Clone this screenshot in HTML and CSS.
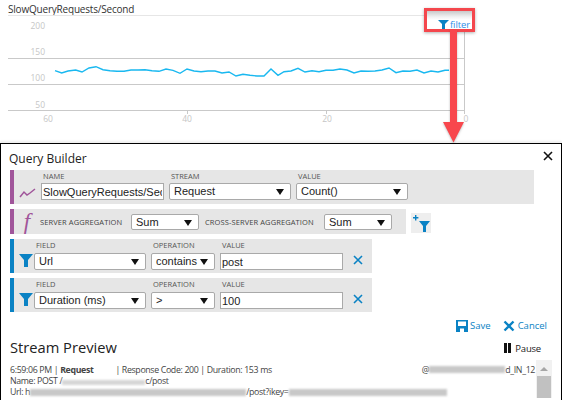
FILE: index.html
```html
<!DOCTYPE html>
<html lang="en">
<head>
<meta charset="UTF-8">
<meta name="viewport" content="width=device-width, initial-scale=1.0">
<title>Query Builder</title>
<link rel="stylesheet" href="styles.css">
</head>
<body>

<div class="chart">
    <div class="chart-title">SlowQueryRequests/Second</div>
    <svg class="chart-plot" width="562" height="143" viewBox="0 0 562 143">
        <path class="grid-top" d="M8 15.5H465"/>
        <path class="grid" d="M8 58.5H465M8 84.5H465M8 110.5H465M464.5 15V114M187.5 110V114M326.5 110V114"/>
        <text class="axis" x="45" y="29" text-anchor="end">200</text>
        <text class="axis" x="45" y="55" text-anchor="end">150</text>
        <text class="axis" x="45" y="81" text-anchor="end">100</text>
        <text class="axis" x="45" y="108" text-anchor="end">50</text>
        <text class="axis" x="48" y="122" text-anchor="middle">60</text>
        <text class="axis" x="187" y="122" text-anchor="middle">40</text>
        <text class="axis" x="327" y="122" text-anchor="middle">20</text>
        <text class="axis" x="466" y="122" text-anchor="middle">0</text>
        <polyline class="series" points="55,70.7 61.7,73 68,71 75.7,70 82,72 89,68 96,66.7 103,69.7 110,70.7 117,71.3 124,71.3 131,70 138,70 145,69.7 152,70.7 159,71.3 166,69 173,70.3 180,73.3 187,69 194,71 201,71.7 208,71 215,71 222,73 229,72 236,76 243,74.3 250,75.3 257,76 264,76 271,69 278,75.3 284,71.7 291,71 298,68.3 305,72 312,70.7 319,71.7 326,70.3 333,70.3 340,69 347,70 354,73 361,71 368,71.3 375,71 382,70 389,68 396,72.7 403,71 410,71.3 417,70 424,73 431,71 438,72 445,70.3 449,70.3"/>
    </svg>
    <div class="filter-mark">
        <svg width="11" height="9" viewBox="0 0 11 9"><path class="blue-fill" d="M0 0H11L7 4V9H4V4Z"/></svg>
        <span>filter</span>
    </div>
    <svg class="arrow" width="24" height="113" viewBox="0 0 24 113">
        <path d="M9 0H16V92H23L12.5 112.5L2 92H9Z"/>
    </svg>
</div>

<div class="modal">
    <div class="modal-head">
        <h2>Query Builder</h2>
        <svg class="close" width="10" height="10" viewBox="0 0 10 10"><path d="M1 1L9 9M9 1L1 9"/></svg>
    </div>

    <div class="row row-name purple">
        <svg class="row-icon" width="17" height="10" viewBox="0 0 17 10"><path d="M1 9L5 4L8 7L11 5L16 1"/></svg>
        <div class="col col-name">
            <label>Name</label>
            <input type="text" value="SlowQueryRequests/Second">
        </div>
        <div class="col col-stream">
            <label>Stream</label>
            <div class="pick">Request</div>
        </div>
        <div class="col col-value">
            <label>Value</label>
            <div class="pick">Count()</div>
        </div>
    </div>

    <div class="row-wrap">
        <div class="row row-agg purple">
            <span class="fx">f</span>
            <label class="label-server">Server Aggregation</label>
            <div class="pick pick-sum">Sum</div>
            <label class="label-cross">Cross-Server Aggregation</label>
            <div class="pick pick-sum">Sum</div>
        </div>
        <div class="add-filter">
            <svg width="20" height="20" viewBox="0 0 20 20">
                <path class="blue-fill" d="M8 8H19L15 13V19H12V13Z"/>
                <path class="blue-fill" d="M4 2H5.4V4H7.4V5.4H5.4V7.4H4V5.4H2V4H4Z"/>
            </svg>
        </div>
    </div>

    <div class="row row-filter blue">
        <svg class="row-icon funnel" width="14" height="13" viewBox="0 0 14 13"><path class="blue-fill" d="M0 0H14L9 6V13H5V6Z"/></svg>
        <div class="col col-field">
            <label>Field</label>
            <div class="pick">Url</div>
        </div>
        <div class="col col-op">
            <label>Operation</label>
            <div class="pick">contains</div>
        </div>
        <div class="col col-val">
            <label>Value</label>
            <input type="text" value="post">
        </div>
        <svg class="remove" width="10" height="10" viewBox="0 0 10 10"><path d="M1 1L9 9M9 1L1 9"/></svg>
    </div>

    <div class="row row-filter blue">
        <svg class="row-icon funnel" width="14" height="13" viewBox="0 0 14 13"><path class="blue-fill" d="M0 0H14L9 6V13H5V6Z"/></svg>
        <div class="col col-field">
            <label>Field</label>
            <div class="pick">Duration (ms)</div>
        </div>
        <div class="col col-op">
            <label>Operation</label>
            <div class="pick">&gt;</div>
        </div>
        <div class="col col-val">
            <label>Value</label>
            <input type="text" value="100">
        </div>
        <svg class="remove" width="10" height="10" viewBox="0 0 10 10"><path d="M1 1L9 9M9 1L1 9"/></svg>
    </div>

    <div class="actions">
        <span class="action">
            <svg width="12" height="12" viewBox="0 0 12 12"><path class="blue-fill" d="M0 0H12V12H0ZM2 1.5V6H10V1.5ZM4 8.5V12H8V8.5Z" fill-rule="evenodd"/></svg>
            Save
        </span>
        <span class="action">
            <svg width="12" height="12" viewBox="0 0 12 12"><path class="cancel" d="M1.5 1.5L10.5 10.5M10.5 1.5L1.5 10.5"/></svg>
            Cancel
        </span>
    </div>

    <div class="preview-head">
        <h2 class="preview-title">Stream Preview</h2>
        <span class="pause"><i></i><i></i>Pause</span>
    </div>

    <div class="log">
        <div class="log-text">
            <div class="log-top">
                <span>6:59:06 PM | <b>Request</b></span>
                <span class="log-meta">| Response Code: 200 | Duration: 153 ms</span>
                <span class="log-right">@<span class="smudge s-host"></span>d_IN_12</span>
            </div>
            <div>Name: POST /<span class="smudge s-name"></span>c/post</div>
            <div>Url: h<span class="smudge s-url"></span>/post?ikey=<span class="smudge s-key"></span></div>
        </div>
        <div class="scrollbar">
            <div class="scroll-up"></div>
            <div class="scroll-thumb"></div>
        </div>
    </div>
</div>

</body>
</html>
```

FILE: styles.css
```css
html, body {
    margin: 0;
    height: 400px;
    overflow: hidden;
    background: #fff;
}

body {
    font-family: "Open Sans", sans-serif;
    color: #333;
}

.blue-fill {
    fill: #0a82c4;
}

/* chart */
.chart {
    position: relative;
    height: 143px;
}

.chart-title {
    padding: 2px 0 0 8px;
    font-size: 10px;
    line-height: 14px;
    letter-spacing: -0.2px;
    color: #333;
}

.chart-plot {
    position: absolute;
    top: 0;
    left: 0;
}

.chart-plot path {
    fill: none;
}

.grid-top {
    stroke: #e6e6e6;
}

.grid {
    stroke: #c9c9c9;
}

.axis {
    font-size: 8.5px;
    fill: #c6c6c6;
}

.series {
    fill: none;
    stroke: #19b8f0;
    stroke-width: 1.4;
}

.filter-mark {
    position: absolute;
    top: 8px;
    left: 424px;
    box-sizing: border-box;
    width: 51px;
    height: 24px;
    padding: 8px 0 0 11px;
    display: flex;
    align-items: center;
    gap: 1px;
    border: 3px solid #f4474d;
    background: linear-gradient(#c9c9c9 0, #f2f2f2 6px, #fff 9px);
    box-shadow: 0 1px 3px rgba(0, 0, 0, 0.3);
    font-size: 9.5px;
    letter-spacing: -0.1px;
    color: #2f8fe8;
}

.filter-mark svg {
    flex: none;
}

.arrow {
    position: absolute;
    top: 30px;
    left: 441px;
    z-index: 2;
    filter: drop-shadow(0 1px 1px rgba(0, 0, 0, 0.25));
}

.arrow path {
    fill: #f8474d;
}

/* modal */
.modal {
    box-sizing: border-box;
    height: 257px;
    border: 1px solid #000;
    border-bottom: none;
    box-shadow: 0 -2px 2px #eee;
    padding-left: 9px;
    overflow: hidden;
}

.modal-head {
    height: 26px;
    display: flex;
    justify-content: space-between;
    align-items: center;
    padding-right: 8px;
}

.modal-head h2 {
    margin: 2px 0 0 -1px;
    font-size: 12px;
    font-weight: 400;
    color: #222;
}

.close {
    margin-top: -3px;
}

.close path {
    stroke: #111;
    stroke-width: 1.6;
    fill: none;
}

.row {
    box-sizing: border-box;
    display: flex;
    background: #e6e6e6;
    border-left: 4px solid #a0559a;
    margin-bottom: 5px;
}

.row.blue {
    border-left-color: #0a82c4;
}

.row label {
    display: block;
    font-size: 7.5px;
    line-height: 10px;
    text-transform: uppercase;
    color: #555;
}

.col {
    display: flex;
    flex-direction: column;
}

.col label {
    padding-left: 2px;
}

.row input {
    box-sizing: border-box;
    width: 100%;
    height: 17px;
    margin: 0;
    padding: 0 1px;
    border: 1px solid #a9a9a9;
    background: #fff;
    font-family: "Liberation Sans", sans-serif;
    font-size: 11px;
    color: #222;
    outline: none;
}

.pick {
    position: relative;
    box-sizing: border-box;
    height: 17px;
    padding-left: 4px;
    border: 1px solid #a9a9a9;
    border-radius: 2px;
    background: #fff;
    font-family: "Liberation Sans", sans-serif;
    font-size: 11px;
    line-height: 15px;
    color: #222;
}

.pick::after {
    content: "";
    position: absolute;
    right: 6px;
    top: 5px;
    border-left: 4px solid transparent;
    border-right: 4px solid transparent;
    border-top: 6px solid #111;
}

.row-name {
    width: 524px;
    height: 34px;
}

.row-name .row-icon {
    flex: none;
    margin: 18px 0 0 5px;
}

.row-name .row-icon path {
    fill: none;
    stroke: #a0559a;
    stroke-width: 1.5;
}

.row-name .col-name {
    width: 123px;
    margin-left: 5px;
}

.row-name .col-stream {
    width: 122px;
    margin-left: 5px;
}

.row-name .col-value {
    width: 112px;
    margin-left: 5px;
}

.row-name label {
    margin-bottom: 2px;
    margin-top: 1px;
}

.row-wrap {
    display: flex;
    gap: 5px;
    align-items: flex-start;
}

.row-agg {
    width: 396px;
    height: 25px;
    align-items: center;
}

.row-agg .fx {
    flex: none;
    width: 26px;
    text-align: center;
    font-family: "Liberation Serif", serif;
    font-style: italic;
    font-size: 23px;
    line-height: 25px;
    color: #a0559a;
}

.row-agg label {
    flex: none;
    font-size: 7.5px;
    letter-spacing: 0.1px;
    color: #444;
    white-space: nowrap;
}

.label-server {
    width: 84px;
}

.label-cross {
    width: 112px;
}

.pick-sum {
    flex: none;
    width: 68px;
    margin: 0 6px 0 7px;
    height: 16px;
    line-height: 14px;
}

.add-filter {
    width: 20px;
    height: 20px;
    margin-top: 4px;
    background: #eee;
}

.row-filter {
    width: 362px;
    height: 34px;
}

.row-filter .funnel {
    margin: 15px 0 0 5px;
    flex: none;
}

.col-field {
    width: 112px;
    margin-left: 1px;
}

.col-op {
    width: 64px;
    margin-left: 5px;
}

.col-val {
    width: 123px;
    margin-left: 5px;
}

.row-filter .col label {
    margin: 1px 0 3px;
}

.remove {
    margin: 16px 0 0 10px;
}

.remove path {
    stroke: #0a82c4;
    stroke-width: 1.6;
    fill: none;
}

.actions {
    display: flex;
    justify-content: flex-end;
    gap: 12px;
    padding-right: 14px;
    margin-top: 7px;
    height: 13px;
}

.action {
    display: flex;
    align-items: center;
    gap: 3px;
    font-size: 9.5px;
    color: #0a82c4;
}

.action:first-child {
    gap: 2px;
}

.cancel {
    fill: none;
    stroke: #0a82c4;
    stroke-width: 2.4;
}

.preview-head {
    display: flex;
    justify-content: space-between;
    align-items: center;
    height: 24px;
    margin-top: 3px;
    padding-right: 20px;
}

.preview-title {
    margin: 0;
    font-size: 14.7px;
    font-weight: 400;
    color: #222;
}

.pause {
    display: flex;
    align-items: center;
    font-size: 9.5px;
    letter-spacing: -0.2px;
    color: #222;
    margin-top: 2px;
}

.pause i {
    width: 3px;
    height: 10px;
    background: #111;
    margin-right: 1px;
}

.pause i:nth-child(2) {
    margin-right: 4px;
}

.log {
    display: flex;
    justify-content: space-between;
    padding-right: 9px;
    margin-top: 4px;
}

.log-text {
    width: 525px;
    font-size: 8.8px;
    letter-spacing: -0.35px;
    line-height: 11px;
    color: #444;
    white-space: nowrap;
}

.log-top {
    display: flex;
    height: 13px;
    line-height: 14px;
}

.log-meta {
    margin-left: 22px;
}

.log-right {
    margin-left: auto;
    display: flex;
    align-items: center;
}

.smudge {
    display: inline-block;
    height: 7px;
    background: #c8c8c8;
    filter: blur(1px);
    vertical-align: -1px;
}

.s-host {
    width: 76px;
}

.s-name {
    width: 83px;
    height: 5px;
    background: #d6d6d6;
}

.s-url {
    width: 216px;
}

.s-key {
    width: 158px;
}

.scrollbar {
    width: 16px;
    height: 38px;
    background: #f1f1f1;
    margin-top: -3px;
}

.scroll-up {
    width: 0;
    margin: 7px auto 5px;
    border-left: 4px solid transparent;
    border-right: 4px solid transparent;
    border-bottom: 4px solid #a6a6a6;
}

.scroll-thumb {
    width: 14px;
    height: 22px;
    margin: 0 auto;
    background: #c1c1c1;
}
```
